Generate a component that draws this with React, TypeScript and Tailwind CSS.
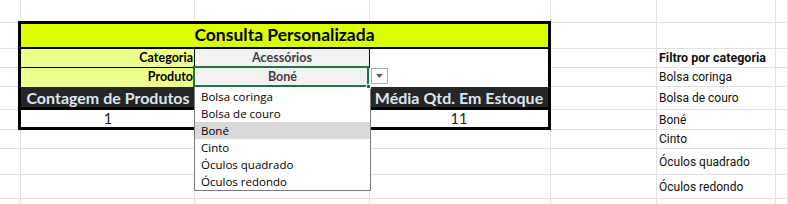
import React from 'react';
import { twMerge } from 'tailwind-merge';

// column widths of the sheet (A..G), written out so Tailwind sees them
const W = ['w-[21px]', 'w-[174px]', 'w-[175px]', 'w-[181px]', 'w-[106px]', 'w-[119px]', 'w-[12px]'];

const Cell = ({ col, className = '', children }: { col: number; className?: string; children?: React.ReactNode }) => (
  <div className={twMerge('h-full shrink-0 border-r border-b border-[#e1e1e1]', W[col], className)}>{children}</div>
);

const Side = ({ children, bold = false }: { children: React.ReactNode; bold?: boolean }) => (
  <Cell
    col={5}
    className={
      'flex items-center pl-[2px] font-["Roboto",sans-serif] text-[#111] ' +
      (bold ? 'font-bold text-[12.5px]' : 'text-[12px]')
    }
  >
    {children}
  </Cell>
);

const options = ['Bolsa coringa', 'Bolsa de couro', 'Boné', 'Cinto', 'Óculos quadrado', 'Óculos redondo'];

const App = () => {
  return (
    <div className="w-[788px] h-[204px] overflow-hidden bg-white font-['Lato',sans-serif]">
      {/* row 1 */}
      <div className="flex h-[23px]">
        {W.map((_, i) => (
          <Cell key={i} col={i} />
        ))}
      </div>

      {/* title */}
      <div className="flex h-[26px]">
        <Cell col={0} />
        <div className="-ml-[3px] -mt-[2px] h-[28px] w-[533px] shrink-0 border-[3px] border-b-2 border-black bg-[#dcff00] flex items-center justify-center text-[17.5px] font-bold text-black">
          Consulta Personalizada
        </div>
        <Cell col={4} />
        <Cell col={5} />
        <Cell col={6} />
      </div>

      {/* categoria */}
      <div className="flex h-[19px]">
        <Cell col={0} />
        <div className="-ml-[3px] h-full w-[177px] shrink-0 border-l-[3px] border-r border-b border-black bg-[#efff8c] flex items-center justify-end pr-[1px] text-[12.5px] font-bold text-black">
          Categoria
        </div>
        <div className="h-full w-[175px] shrink-0 border-r border-b border-black bg-[#f2f2f2] flex items-center justify-center text-[12.5px] font-bold text-[#404040]">
          Acessórios
        </div>
        <div className="h-full w-[181px] shrink-0 border-r-[3px] border-black bg-white" />
        <Cell col={4} />
        <Side bold>Filtro por categoria</Side>
        <Cell col={6} />
      </div>

      {/* produto */}
      <div className="flex h-[19px]">
        <Cell col={0} />
        <div className="-ml-[3px] h-full w-[177px] shrink-0 border-l-[3px] border-r border-black bg-[#efff8c] flex items-center justify-end pr-[1px] text-[12.5px] font-bold text-black">
          Produto
        </div>
        <div className="relative h-full w-[175px] shrink-0 bg-[#f2f2f2] flex items-center justify-center text-[12.5px] font-bold text-[#404040]">
          Boné
          <div className="absolute -left-[1px] top-[18px] z-20 w-[177px] h-[105px] border border-[#7a7a7a] bg-white py-[1px] font-['Open_Sans',sans-serif] text-[11.5px] font-normal text-black">
            {options.map((o) => (
              <div key={o} className={'h-[17px] leading-[17px] pl-[6px] ' + (o === 'Boné' ? 'bg-[#d9d9d9]' : '')}>
                {o}
              </div>
            ))}
          </div>
          <div className="absolute -left-[2px] -top-[2px] z-30 w-[176px] h-[21px] border-2 border-[#217346]" />
          <div className="absolute left-[171px] top-[16px] z-30 w-[5px] h-[5px] bg-[#217346] border border-white" />
        </div>
        <div className="relative h-full w-[181px] shrink-0 border-r-[3px] border-black bg-white">
          <div className="absolute left-[1px] top-0 w-[17px] h-[16px] border border-[#ababab] bg-white flex items-center justify-center">
            <svg width="7" height="4" viewBox="0 0 7 4">
              <path d="M0 0h7L3.5 4z" fill="#5c5c5c" />
            </svg>
          </div>
        </div>
        <Cell col={4} />
        <Side>Bolsa coringa</Side>
        <Cell col={6} />
      </div>

      {/* headers */}
      <div className="flex h-[23px]">
        <Cell col={0} />
        <div className="-ml-[3px] h-full w-[177px] shrink-0 border-l-[3px] border-b-[3px] border-black bg-[#262626] flex items-center justify-center pt-[2px] text-[16px] font-bold text-[#dde6f0]">
          Contagem de Produtos
        </div>
        <div className="h-full w-[175px] shrink-0 border-b-[3px] border-black bg-[#262626]" />
        <div className="h-full w-[181px] shrink-0 border-r-[3px] border-b-[3px] border-black bg-[#262626] flex items-center justify-center pt-[2px] text-[16px] font-bold text-[#dde6f0]">
          Média Qtd. Em Estoque
        </div>
        <Cell col={4} />
        <Side>Bolsa de couro</Side>
        <Cell col={6} />
      </div>

      {/* values */}
      <div className="flex h-[20px]">
        <Cell col={0} />
        <div className="-ml-[3px] h-full w-[177px] shrink-0 border-l-[3px] border-b-[3px] border-black bg-white flex items-center justify-center text-[14.5px] text-[#222]">
          1
        </div>
        <div className="h-full w-[175px] shrink-0 border-b-[3px] border-black bg-white" />
        <div className="h-full w-[181px] shrink-0 border-r-[3px] border-b-[3px] border-black bg-white flex items-center justify-center text-[14.5px] text-[#222]">
          11
        </div>
        <Cell col={4} />
        <Side>Boné</Side>
        <Cell col={6} />
      </div>

      <div className="flex h-[19px]">
        {[0, 1, 2, 3, 4].map((i) => (
          <Cell key={i} col={i} />
        ))}
        <Side>Cinto</Side>
        <Cell col={6} />
      </div>

      <div className="flex h-[26px]">
        {[0, 1, 2, 3, 4].map((i) => (
          <Cell key={i} col={i} />
        ))}
        <Side>Óculos quadrado</Side>
        <Cell col={6} />
      </div>

      <div className="flex h-[24px]">
        {[0, 1, 2, 3, 4].map((i) => (
          <Cell key={i} col={i} />
        ))}
        <Side>Óculos redondo</Side>
        <Cell col={6} />
      </div>

      <div className="flex h-[10px]">
        {W.map((_, i) => (
          <Cell key={i} col={i} />
        ))}
      </div>
    </div>
  );
};

export default App;
